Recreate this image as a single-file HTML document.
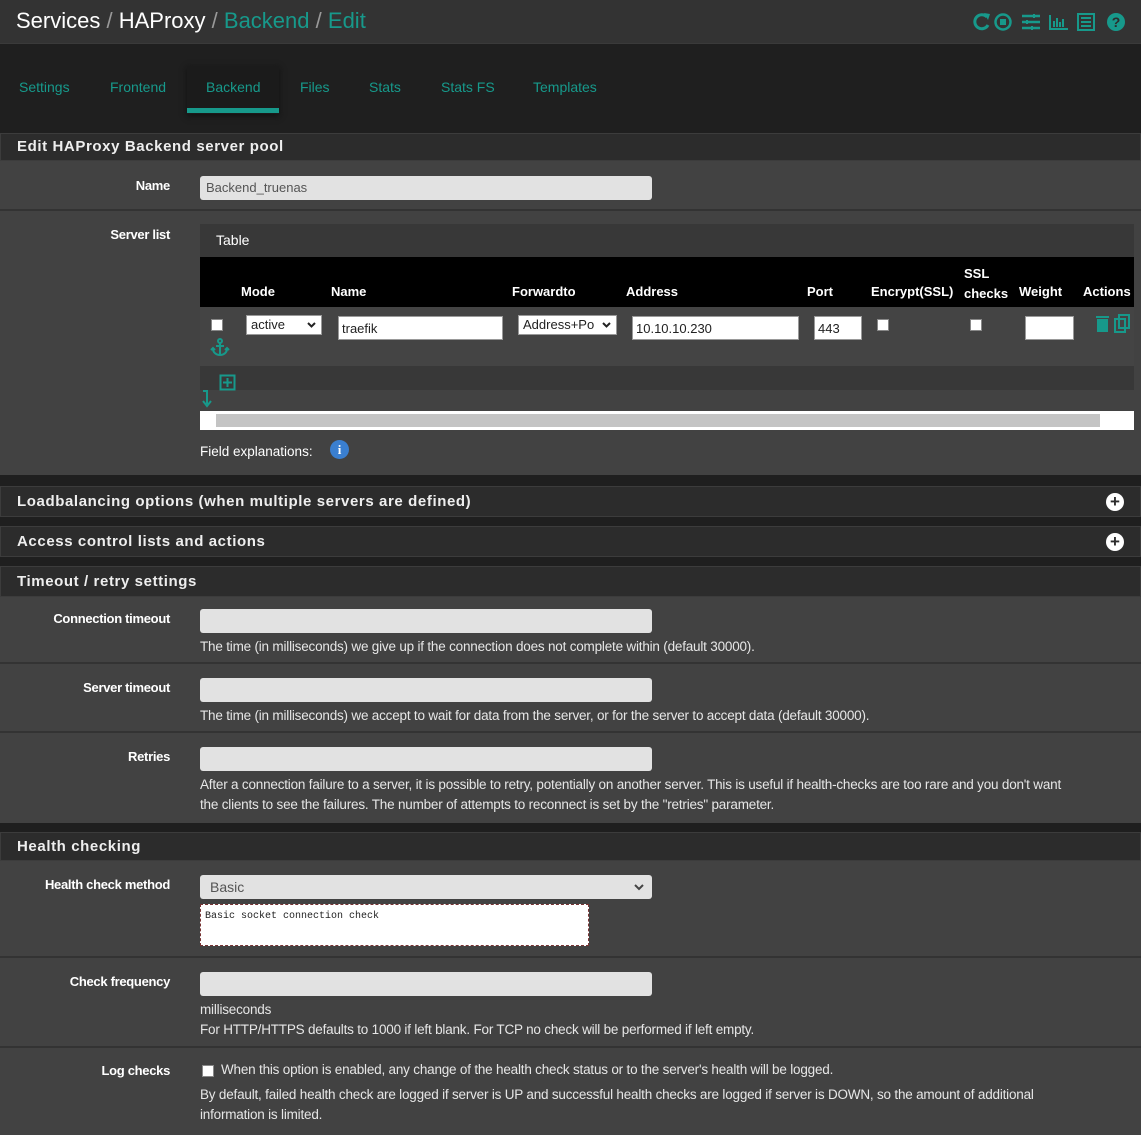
<!DOCTYPE html>
<html><head><meta charset="utf-8"><style>
*{box-sizing:border-box;margin:0;padding:0}
body{width:1141px;height:1135px;background:#1f1f1f;font-family:"Liberation Sans",sans-serif;color:#ddd;position:relative;overflow:hidden;font-size:13px}
.a{position:absolute}
.teal{color:#17998b}
.top{left:0;top:0;width:1141px;height:44px;background:#333;border-bottom:1px solid #3a3a3a}
.hd{left:0;width:1141px;background:#2c2c2c;border:1px solid #3c3c3c;color:#eee;font-weight:bold;font-size:15px;letter-spacing:.6px;padding-left:16px}
.bd{left:0;width:1141px;background:#424242}
.sep{left:0;width:1141px;height:2px;background:#333}
.lbl{width:170px;text-align:right;font-weight:bold;font-size:13px;color:#fff;left:0;letter-spacing:-.3px}
.inp{left:200px;width:452px;height:24px;background:#e2e2e2;border-radius:3px}
.help{left:200px;font-size:13.5px;color:#e6e6e6;line-height:20px;letter-spacing:-.2px}
.tab{top:79px;font-size:14px;color:#17998b}
.th{font-weight:bold;color:#fff;font-size:13px}
.w{background:#fff;border:1px solid #999}
.cb{width:12px;height:12px;background:#fff;border:1px solid #888}
.plus{width:18px;height:18px;border-radius:50%;background:#fff;color:#2c2c2c;font-weight:bold;font-size:17px;line-height:18px;text-align:center;right:17px}
.chev{position:absolute;right:5px;top:6px}
</style></head><body>
<div class="a top"></div>
<div class="a" style="left:16px;top:8px;font-size:22px;color:#fff">Services <span style="color:#999">/</span> HAProxy <span style="color:#999">/</span> <span class="teal">Backend</span> <span style="color:#999">/</span> <span class="teal">Edit</span></div>
<svg class="a" style="left:972px;top:10px" width="158" height="24" viewBox="0 0 158 24" fill="none" stroke="#17998b">
<path d="M15 7a7 7 0 1 0 1 8" stroke-width="3"/><path d="M12 3l6 1-2 6z" fill="#17998b" stroke="none"/>
<circle cx="31" cy="12" r="7.5" stroke-width="2.5"/><rect x="28" y="9" width="6" height="6" fill="#17998b" stroke="none"/>
<path d="M50 6h18M50 12h18M50 18h18" stroke-width="2.5"/><path d="M62 4v4M55 10v4M60 16v4" stroke-width="2"/>
<path d="M78 5v14h18M82 17v-6M85 17v-9M88 17v-5M91 17v-8" stroke-width="2"/>
<rect x="106" y="4" width="16" height="16" stroke-width="2"/><path d="M109 8h10M109 12h10M109 16h10" stroke-width="2"/>
<circle cx="144" cy="12" r="9" fill="#17998b" stroke="none"/><text x="144" y="17" fill="#2c2c2c" stroke="none" font-size="14" font-weight="bold" text-anchor="middle" font-family="Liberation Sans">?</text>
</svg>
<div class="a" style="left:187px;top:66px;width:92px;height:48px;background:#1b1b1b;box-shadow:0 2px 6px #111"></div>
<div class="a" style="left:187px;top:108px;width:92px;height:5px;background:#17998b"></div>
<div class="a tab" style="left:19px">Settings</div>
<div class="a tab" style="left:110px">Frontend</div>
<div class="a tab" style="left:206px">Backend</div>
<div class="a tab" style="left:300px">Files</div>
<div class="a tab" style="left:369px">Stats</div>
<div class="a tab" style="left:441px">Stats FS</div>
<div class="a tab" style="left:533px">Templates</div>

<div class="a hd" style="top:133px;height:28px;line-height:26px">Edit HAProxy Backend server pool</div>
<div class="a bd" style="top:161px;height:314px"></div>
<div class="a lbl" style="top:178px">Name</div>
<div class="a inp" style="top:176px;padding:4px 6px;color:#555;font-size:13px">Backend_truenas</div>
<div class="a sep" style="top:209px"></div>
<div class="a lbl" style="top:227px">Server list</div>
<div class="a" style="left:200px;top:224px;width:934px;height:33px;background:#383838;color:#fff;font-size:14px;padding:8px 16px">Table</div>
<div class="a" style="left:200px;top:257px;width:934px;height:50px;background:#000"></div>
<div class="a th" style="left:241px;top:284px">Mode</div>
<div class="a th" style="left:331px;top:284px">Name</div>
<div class="a th" style="left:512px;top:284px">Forwardto</div>
<div class="a th" style="left:626px;top:284px">Address</div>
<div class="a th" style="left:807px;top:284px">Port</div>
<div class="a th" style="left:871px;top:284px">Encrypt(SSL)</div>
<div class="a th" style="left:964px;top:264px;line-height:20px">SSL<br>checks</div>
<div class="a th" style="left:1019px;top:284px">Weight</div>
<div class="a th" style="left:1083px;top:284px">Actions</div>
<div class="a" style="left:200px;top:307px;width:934px;height:59px;background:#444"></div>
<div class="a cb" style="left:211px;top:319px"></div>
<div class="a w" style="left:246px;top:315px;width:76px;height:20px;color:#222;padding:1px 4px;font-size:13px">active<svg class="chev" width="9" height="6"><path d="M1 1l3.5 3.5L8 1" fill="none" stroke="#222" stroke-width="2"/></svg></div>
<div class="a w" style="left:338px;top:316px;width:165px;height:24px;color:#222;padding:4px 3px">traefik</div>
<div class="a w" style="left:518px;top:315px;width:99px;height:20px;color:#222;padding:1px 4px;font-size:13px;overflow:hidden;white-space:nowrap">Address+Po<svg class="chev" width="9" height="6" style="background:#fff"><path d="M1 1l3.5 3.5L8 1" fill="none" stroke="#222" stroke-width="2"/></svg></div>
<div class="a w" style="left:632px;top:316px;width:167px;height:24px;color:#222;padding:4px 3px">10.10.10.230</div>
<div class="a w" style="left:814px;top:316px;width:48px;height:24px;color:#222;padding:4px 3px">443</div>
<div class="a cb" style="left:877px;top:319px"></div>
<div class="a cb" style="left:970px;top:319px"></div>
<div class="a w" style="left:1025px;top:316px;width:49px;height:24px"></div>
<svg class="a" style="left:1095px;top:314px" width="40" height="20"><rect x="2" y="5" width="11" height="13" fill="#17998b"/><rect x="1" y="2" width="13" height="2" fill="#17998b"/><rect x="20" y="5" width="10" height="13" fill="none" stroke="#17998b" stroke-width="2"/><rect x="24" y="1" width="10" height="13" fill="none" stroke="#17998b" stroke-width="2"/></svg>
<svg class="a" style="left:210px;top:338px" width="20" height="20" fill="none" stroke="#17998b" stroke-width="2"><circle cx="10" cy="3" r="2"/><path d="M10 5v12M6 8h8M3 11a7 6 0 0 0 14 0"/><path d="M1 12l2-2 2 2M15 12l2-2 2 2"/></svg>
<div class="a" style="left:200px;top:366px;width:934px;height:24px;background:#383838"></div>
<svg class="a" style="left:219px;top:374px" width="18" height="18"><rect x="1.5" y="1.5" width="14" height="14" fill="none" stroke="#17998b" stroke-width="2"/><path d="M8.5 4v9M4 8.5h9" stroke="#17998b" stroke-width="2"/></svg>
<svg class="a" style="left:201px;top:390px" width="12" height="18"><path d="M2 1h4v13M2 11l4 5 4-5" fill="none" stroke="#17998b" stroke-width="2"/></svg>
<div class="a" style="left:200px;top:411px;width:934px;height:19px;background:#fff"></div>
<div class="a" style="left:216px;top:414px;width:884px;height:13px;background:#c4c4c4"></div>
<div class="a" style="left:200px;top:444px;color:#fff;font-size:13.5px">Field explanations:</div>
<div class="a" style="left:330px;top:440px;width:19px;height:19px;border-radius:50%;background:#3a7fd0;color:#fff;font-weight:bold;font-size:13px;text-align:center;line-height:19px;font-family:'Liberation Serif',serif">i</div>

<div class="a hd" style="top:486px;height:31px;line-height:29px">Loadbalancing options (when multiple servers are defined)</div>
<div class="a plus" style="top:493px">+</div>
<div class="a hd" style="top:526px;height:31px;line-height:29px">Access control lists and actions</div>
<div class="a plus" style="top:533px">+</div>

<div class="a hd" style="top:566px;height:31px;line-height:29px">Timeout / retry settings</div>
<div class="a bd" style="top:597px;height:226px"></div>
<div class="a lbl" style="top:611px">Connection timeout</div>
<div class="a inp" style="top:609px"></div>
<div class="a help" style="top:637px">The time (in milliseconds) we give up if the connection does not complete within (default 30000).</div>
<div class="a sep" style="top:662px"></div>
<div class="a lbl" style="top:680px">Server timeout</div>
<div class="a inp" style="top:678px"></div>
<div class="a help" style="top:706px">The time (in milliseconds) we accept to wait for data from the server, or for the server to accept data (default 30000).</div>
<div class="a sep" style="top:731px"></div>
<div class="a lbl" style="top:749px">Retries</div>
<div class="a inp" style="top:747px"></div>
<div class="a help" style="top:775px;width:868px">After a connection failure to a server, it is possible to retry, potentially on another server. This is useful if health-checks are too rare and you don't want the clients to see the failures. The number of attempts to reconnect is set by the "retries" parameter.</div>

<div class="a hd" style="top:832px;height:29px;line-height:27px">Health checking</div>
<div class="a bd" style="top:861px;height:274px"></div>
<div class="a lbl" style="top:877px">Health check method</div>
<div class="a inp" style="top:875px;padding:4px 10px;color:#555;font-size:14px">Basic<svg class="chev" width="10" height="7" style="right:8px;top:9px"><path d="M1 1l4 4 4-4" fill="none" stroke="#444" stroke-width="2"/></svg></div>
<div class="a" style="left:200px;top:904px;width:389px;height:42px;background:#fff;border:1px dashed #733;font-family:'Liberation Mono',monospace;font-size:10px;color:#222;padding:6px 4px">Basic socket connection check</div>
<div class="a sep" style="top:956px"></div>
<div class="a lbl" style="top:974px">Check frequency</div>
<div class="a inp" style="top:972px"></div>
<div class="a help" style="top:1000px">milliseconds<br>For HTTP/HTTPS defaults to 1000 if left blank. For TCP no check will be performed if left empty.</div>
<div class="a sep" style="top:1046px"></div>
<div class="a lbl" style="top:1063px">Log checks</div>
<div class="a cb" style="left:202px;top:1065px"></div>
<div class="a help" style="left:221px;top:1060px">When this option is enabled, any change of the health check status or to the server's health will be logged.</div>
<div class="a help" style="top:1085px;width:890px">By default, failed health check are logged if server is UP and successful health checks are logged if server is DOWN, so the amount of additional information is limited.</div>
</body></html>
